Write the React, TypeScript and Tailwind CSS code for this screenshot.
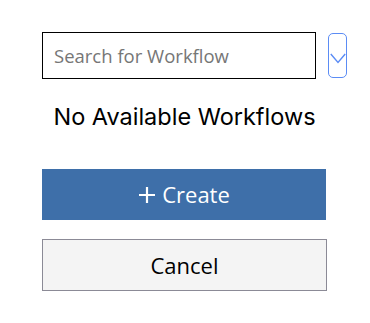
import { useState } from 'react'

export default function App() {
  const [query, setQuery] = useState('')

  return (
    <div className="min-h-screen bg-white font-['Open_Sans',sans-serif]">
      <div className="ml-[42px] w-[285px] pt-[32px]">
        <div className="flex items-center gap-[12px]">
          <input
            value={query}
            onChange={(e) => setQuery(e.target.value)}
            placeholder="Search for Workflow"
            className="h-[47px] w-[274px] flex-none border-[1.5px] border-black px-[11px] text-[18.5px] text-black outline-none placeholder:text-[#767676]"
          />
          <button className="flex h-[45px] w-[19px] flex-none items-center justify-center rounded-[5px] border-[1.5px] border-[#5b8cf5] bg-white p-0">
            <svg width="16" height="11" viewBox="0 0 16 11" fill="none" className="mt-[6px] flex-none">
              <path d="M0.8 1 8 9.5 15.2 1" stroke="#5b8cf5" strokeWidth="1.4" />
            </svg>
          </button>
        </div>

        <p className="mt-[23px] text-center font-['Inter',sans-serif] text-[23.5px] leading-[30px] text-black">
          No Available Workflows
        </p>

        <button className="mt-[37px] flex h-[51px] w-[284px] items-center justify-center gap-[6px] bg-[#3e6fa9] text-[22px] text-white">
          <svg width="18" height="18" viewBox="0 0 18 18">
            <path d="M9 1v16M1 9h16" stroke="white" strokeWidth="2.2" />
          </svg>
          Create
        </button>

        <button className="mt-[19px] h-[52px] w-[285px] border-[1.5px] border-[#8b8a96] bg-[#f4f4f4] text-[22px] text-black">
          Cancel
        </button>
      </div>
    </div>
  )
}
